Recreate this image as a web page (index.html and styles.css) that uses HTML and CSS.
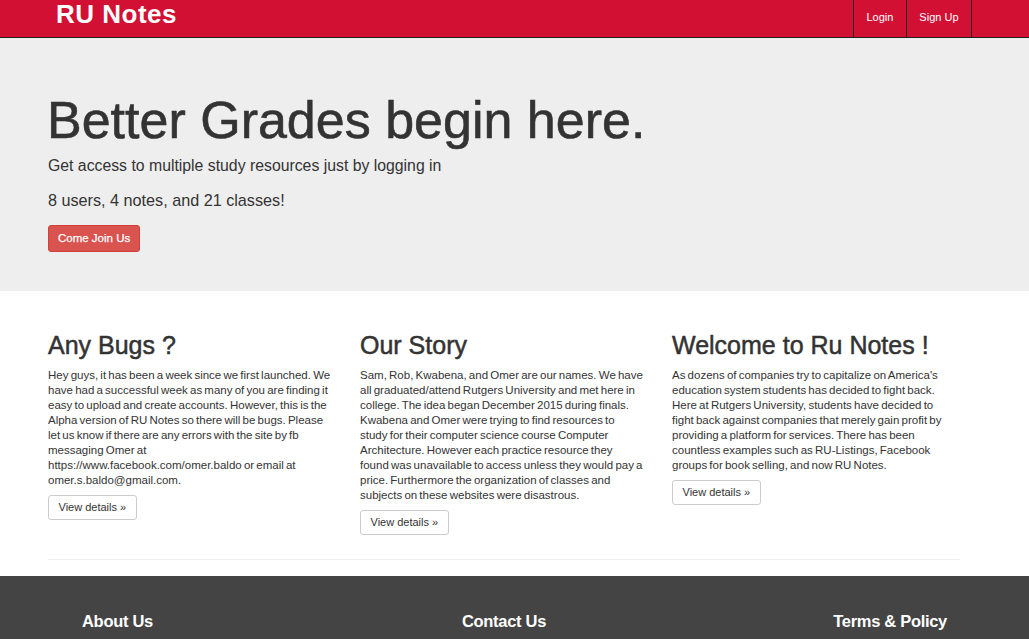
FILE: index.html
```html
<!DOCTYPE html>
<html lang="en">
<head>
<meta charset="utf-8">
<title>RU Notes</title>
<link rel="stylesheet" href="styles.css">
</head>
<body>
<header class="navbar">
  <a class="brand" href="#">RU Notes</a>
  <ul class="nav-links">
    <li><a href="#">Login</a></li>
    <li><a href="#">Sign Up</a></li>
  </ul>
</header>

<section class="jumbotron">
  <div class="container">
    <h1 class="hero-title">Better Grades begin here.</h1>
    <p class="hero-lead">Get access to multiple study resources just by logging in</p>
    <p class="hero-stats">8 users, 4 notes, and 21 classes!</p>
    <a class="btn btn-danger" href="#">Come Join Us</a>
  </div>
</section>

<main class="container features">
  <div class="feature-grid">
    <article class="feature">
      <h2>Any Bugs ?</h2>
      <p>Hey guys, it has been a week since we first launched. We have had a successful week as many of you are finding it easy to upload and create accounts. However, this is the Alpha version of RU Notes so there will be bugs. Please let us know if there are any errors with the site by fb messaging Omer at https://www.facebook.com/omer.baldo or email at omer.s.baldo@gmail.com.</p>
      <a class="btn btn-default" href="#">View details &raquo;</a>
    </article>
    <article class="feature">
      <h2>Our Story</h2>
      <p>Sam, Rob, Kwabena, and Omer are our names. We have all graduated/attend Rutgers University and met here in college. The idea began December 2015 during finals. Kwabena and Omer were trying to find resources to study for their computer science course Computer Architecture. However each practice resource they found was unavailable to access unless they would pay a price. Furthermore the organization of classes and subjects on these websites were disastrous.</p>
      <a class="btn btn-default" href="#">View details &raquo;</a>
    </article>
    <article class="feature">
      <h2>Welcome to Ru Notes !</h2>
      <p>As dozens of companies try to capitalize on America's education system students has decided to fight back. Here at Rutgers University, students have decided to fight back against companies that merely gain profit by providing a platform for services. There has been countless examples such as RU-Listings, Facebook groups for book selling, and now RU Notes.</p>
      <a class="btn btn-default" href="#">View details &raquo;</a>
    </article>
  </div>
  <hr class="divider">
</main>

<footer class="footer">
  <div class="footer-grid">
    <h3 class="footer-col footer-left">About Us</h3>
    <h3 class="footer-col footer-center">Contact Us</h3>
    <h3 class="footer-col footer-right">Terms &amp; Policy</h3>
  </div>
</footer>
</body>
</html>
```

FILE: styles.css
```css
* { box-sizing: border-box; }

html, body {
  margin: 0;
  padding: 0;
}

body {
  font-family: "Liberation Sans", Arial, Helvetica, sans-serif;
  color: #333333;
  background: #ffffff;
}

a { text-decoration: none; }

/* ---------- navbar ---------- */
.navbar {
  display: flex;
  justify-content: space-between;
  align-items: flex-start;
  height: 38px;
  background: #d21034;
  border-bottom: 1px solid #1e1e1e;
  padding: 0 57px 0 56px;
}

.brand {
  font-size: 26px;
  line-height: 28px;
  font-weight: bold;
  color: #ffffff;
  letter-spacing: 0.5px;
}

.nav-links {
  display: flex;
  list-style: none;
  margin: 0;
  padding: 0;
  height: 37px;
}

.nav-links li {
  border-left: 1px solid #1e1e1e;
}

.nav-links li:last-child {
  border-right: 1px solid #1e1e1e;
}

.nav-links a {
  display: block;
  height: 37px;
  line-height: 34px;
  padding: 0 12.5px;
  font-size: 11px;
  color: #ffffff;
}

/* ---------- jumbotron ---------- */
.container {
  width: 912px;
  margin-left: 48px;
}

.jumbotron {
  background: #eeeeee;
  padding: 54px 0 39px;
}

.hero-title {
  margin: 0 0 0 -1px;
  font-size: 52px;
  line-height: 1.1;
  font-weight: normal;
  color: #333333;
  -webkit-text-stroke: 0.6px #333333;
}

.hero-lead {
  margin: 6px 0 0;
  font-size: 15.8px;
  line-height: 22px;
  color: #333333;
}

.hero-stats {
  margin: 12px 0 0;
  font-size: 16.2px;
  line-height: 22px;
  color: #333333;
}

.btn {
  display: inline-block;
  border-radius: 3px;
  border: 1px solid transparent;
  font-size: 11px;
  white-space: nowrap;
}

.btn-danger {
  margin-top: 14px;
  background: #d9534f;
  border-color: #d43f3a;
  color: #ffffff;
  font-size: 11.5px;
  line-height: 25px;
  padding: 0 9px;
  -webkit-text-stroke: 0.25px #ffffff;
}

.btn-default {
  background: #ffffff;
  border-color: #cccccc;
  color: #333333;
  line-height: 23px;
  padding: 0 9.5px;
}

/* ---------- features ---------- */
.features {
  padding-top: 41px;
}

.feature-grid {
  display: grid;
  grid-template-columns: repeat(3, 283px);
  column-gap: 29px;
  align-items: start;
}

.feature h2 {
  margin: 0;
  font-size: 25px;
  line-height: 27px;
  font-weight: normal;
  color: #333333;
  -webkit-text-stroke: 0.5px #333333;
}

.feature p {
  margin: 9px 0 7px;
  font-size: 11.5px;
  line-height: 15px;
  word-spacing: -1px;
  color: #333333;
}

.divider {
  margin: 24px 0 16px;
  border: 0;
  border-top: 1px solid #eeeeee;
}

/* ---------- footer ---------- */
.footer {
  background: #444444;
  padding: 35px 82px 40px;
}

.footer-grid {
  display: grid;
  grid-template-columns: 1fr 1fr 1fr;
}

.footer-col {
  margin: 0;
  font-size: 16.5px;
  line-height: 20px;
  font-weight: bold;
  color: #ffffff;
  letter-spacing: -0.3px;
}

.footer-left { text-align: left; }
.footer-center { text-align: center; padding-right: 21px; }
.footer-right { text-align: right; }
```
